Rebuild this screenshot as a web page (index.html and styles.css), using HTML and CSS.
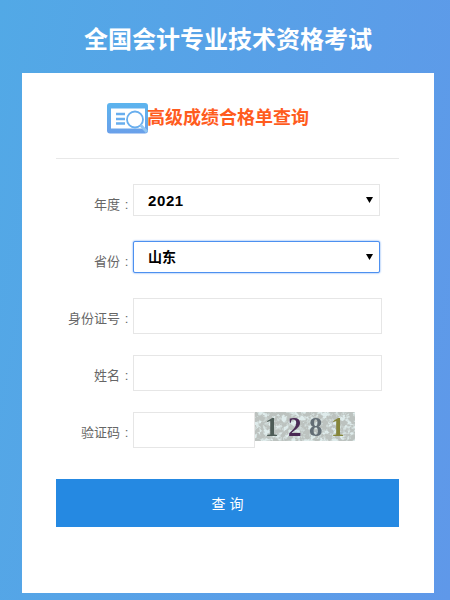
FILE: index.html
```html
<!DOCTYPE html>
<html>
<head>
    <meta charset="utf-8" />
    <title>全国会计专业技术资格考试</title>
    <link rel="stylesheet" href="styles.css">
</head>
<body>
    <h1 class="titulo">全国会计专业技术资格考试</h1>
    <div class="caja">
        <div class="cabecera">
            <svg class="icono" width="42" height="32" viewBox="0 0 42 32">
                <defs>
                    <linearGradient id="azul" x1="0" y1="0" x2="0" y2="1">
                        <stop offset="0" stop-color="#5cb4ee" />
                        <stop offset="1" stop-color="#6aa0ea" />
                    </linearGradient>
                </defs>
                <rect x="0" y="0" width="41" height="30.500" rx="3" fill="url(#azul)" />
                <rect x="4" y="5.500" width="34" height="20" fill="#fff" />
                <path d="M9 11h9M9 16h9M9 20.500h9" stroke="#68aeee" stroke-width="2.600" fill="none" />
                <circle cx="28" cy="16.500" r="8" fill="#fff" stroke="#68aeee" stroke-width="1.800" />
                <path d="M33.500 22l6.500 7" stroke="#92c6f2" stroke-width="3" fill="none" />
            </svg>
            <span class="cabecera-texto">高级成绩合格单查询</span>
        </div>
        <form name="form1" class="formulario">
            <div class="fila">
                <label>年度<span class="dos">:</span></label>
                <select class="campo combo anio">
                    <option>2021</option>
                </select>
            </div>
            <div class="fila">
                <label>省份<span class="dos">:</span></label>
                <select class="campo combo activo">
                    <option>山东</option>
                </select>
            </div>
            <div class="fila">
                <label>身份证号<span class="dos">:</span></label>
                <input class="campo texto" type="text" />
            </div>
            <div class="fila">
                <label>姓名<span class="dos">:</span></label>
                <input class="campo texto" type="text" />
            </div>
            <div class="fila">
                <label>验证码<span class="dos">:</span></label>
                <input class="campo codigo" type="text" />
                <div class="captcha">
                    <svg class="captcha-fondo" width="100" height="29">
                        <defs>
                            <filter id="ruido" x="0" y="0" width="100%" height="100%">
                                <feTurbulence type="fractalNoise" baseFrequency="0.22" numOctaves="3" seed="11" />
                                <feColorMatrix type="matrix" values="0 0 0 0 0.50  0 0 0 0 0.54  0 0 0 0 0.52  4.500 0 0 0 -1.500" />
                            </filter>
                        </defs>
                        <rect width="100" height="29" fill="#dfecec" />
                        <rect width="100" height="29" filter="url(#ruido)" />
                    </svg>
                    <span class="num n1">1</span>
                    <span class="num n2">2</span>
                    <span class="num n3">8</span>
                    <span class="num n4">1</span>
                </div>
            </div>
            <button class="boton" type="button">查 询</button>
        </form>
    </div>
</body>
</html>
```

FILE: styles.css
```css
html, body {
    height: 600px;
}
body {
    margin: 0;
    overflow: hidden;
    background: linear-gradient(100deg, #52a9e6, #5f98e9);
    font-family: "Liberation Sans", "Noto Sans CJK SC", sans-serif;
}
.titulo {
    margin: 0;
    height: 73px;
    padding-left: 6px;
    line-height: 80px;
    text-align: center;
    color: #fff;
    font-size: 24px;
    font-weight: bold;
}
.caja {
    width: 412px;
    height: 520px;
    margin-left: 22px;
    padding: 0 35px 0 34px;
    box-sizing: border-box;
    background-color: #fff;
}
.cabecera {
    display: flex;
    align-items: center;
    height: 86px;
    padding: 7px 0 0 51px;
    box-sizing: border-box;
    border-bottom: 1px solid #e8e8e8;
}
.icono {
    flex: none;
}
.cabecera-texto {
    margin: 0 0 6px -2px;
    color: #ff5c1e;
    font-size: 18px;
    font-weight: bold;
}
.formulario {
    padding-top: 25px;
}
.fila {
    display: flex;
    align-items: flex-start;
    height: 36px;
    margin-bottom: 21px;
}
label {
    width: 77px;
    line-height: 42px;
    text-align: right;
    color: #666;
    font-size: 13px;
}
.dos {
    display: inline-block;
    width: 13px;
    text-align: center;
}
.campo {
    box-sizing: border-box;
    border: 1px solid #e6e6e6;
    background-color: #fff;
    outline: none;
    border-radius: 0;
}
.combo {
    appearance: none;
    width: 247px;
    height: 32px;
    padding-left: 14px;
    background-image: url("data:image/svg+xml,%3Csvg xmlns='http://www.w3.org/2000/svg' width='7' height='6'%3E%3Cpath d='M0 0h7L3.500 6z' fill='%23000'/%3E%3C/svg%3E");
    background-repeat: no-repeat;
    background-position: right 6px center;
    font-family: "Liberation Sans", "Noto Sans CJK SC", sans-serif;
    font-size: 14px;
    font-weight: bold;
    color: #000;
}
.anio {
    font-size: 15px;
    letter-spacing: 0.6px;
}
.activo {
    border-color: #4d90f0;
    border-radius: 2px;
    box-shadow: 0 0 2px #4d90f0;
}
.texto {
    width: 249px;
    height: 36px;
}
.codigo {
    width: 122px;
    height: 36px;
}
.captcha {
    position: relative;
    width: 100px;
    height: 29px;
    overflow: hidden;
    filter: blur(0.5px);
}
.captcha-fondo {
    display: block;
}
.num {
    position: absolute;
    top: 2px;
    font-family: "Liberation Serif", serif;
    font-size: 27px;
    font-weight: bold;
    line-height: 26px;
}
.n1 { left: 10px; color: #4d5c57; }
.n2 { left: 33px; color: #4a2a55; }
.n3 { left: 54px; color: #626d75; }
.n4 { left: 76px; color: #85853a; }
.boton {
    display: block;
    width: 343px;
    height: 48px;
    margin-top: 31px;
    border: 0;
    background-color: #2589e2;
    color: #fff;
    font-family: "Liberation Sans", "Noto Sans CJK SC", sans-serif;
    font-size: 14px;
}
```
